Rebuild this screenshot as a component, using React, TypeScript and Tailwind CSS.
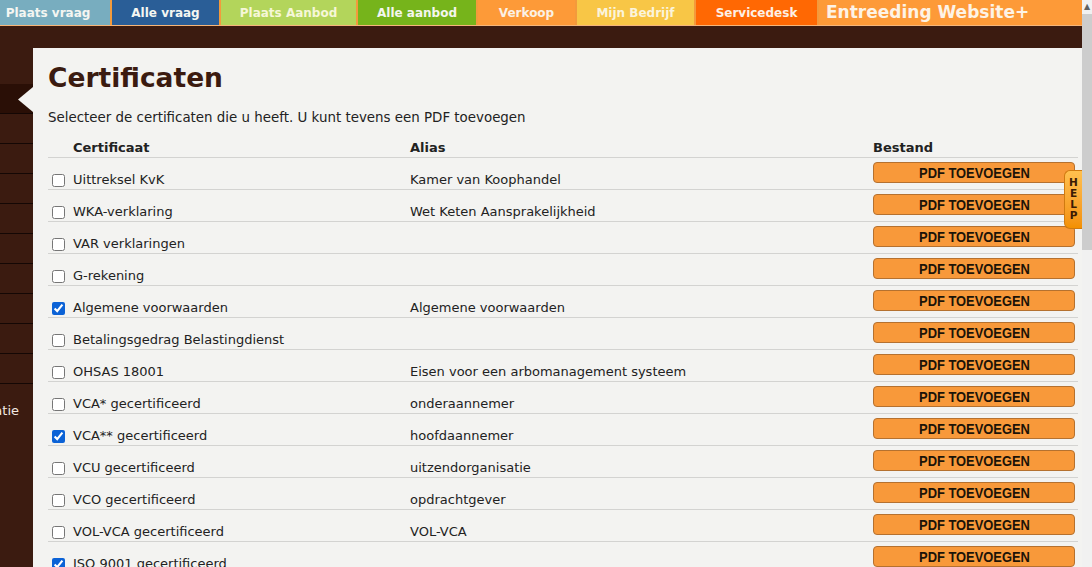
const tabs = [
  { label: "Plaats vraag", w: "w-[110px] pr-[14px]", bg: "bg-[#78adbf]", fg: "text-[#f4f6f2]" },
  { label: "Alle vraag", w: "w-[107px]", bg: "bg-[#2a5e97]", fg: "text-[#f4f6f2]" },
  { label: "Plaats Aanbod", w: "w-[135px]", bg: "bg-[#b3d55b]", fg: "text-[#f6f7d8]" },
  { label: "Alle aanbod", w: "w-[118px]", bg: "bg-[#76b41b]", fg: "text-[#f4f6ee]" },
  { label: "Verkoop", w: "w-[97px]", bg: "bg-[#fd9a38]", fg: "text-[#fbf1e4]" },
  { label: "Mijn Bedrijf", w: "w-[117px]", bg: "bg-[#f8c646]", fg: "text-[#fbf4dc]" },
  { label: "Servicedesk", w: "w-[121px]", bg: "bg-[#ff6803]", fg: "text-[#fdf0e6]" },
];

const rows: { name: string; alias: string; checked?: boolean }[] = [
  { name: "Uittreksel KvK", alias: "Kamer van Koophandel" },
  { name: "WKA-verklaring", alias: "Wet Keten Aansprakelijkheid" },
  { name: "VAR verklaringen", alias: "" },
  { name: "G-rekening", alias: "" },
  { name: "Algemene voorwaarden", alias: "Algemene voorwaarden", checked: true },
  { name: "Betalingsgedrag Belastingdienst", alias: "" },
  { name: "OHSAS 18001", alias: "Eisen voor een arbomanagement systeem" },
  { name: "VCA* gecertificeerd", alias: "onderaannemer" },
  { name: "VCA** gecertificeerd", alias: "hoofdaannemer", checked: true },
  { name: "VCU gecertificeerd", alias: "uitzendorganisatie" },
  { name: "VCO gecertificeerd", alias: "opdrachtgever" },
  { name: "VOL-VCA gecertificeerd", alias: "VOL-VCA" },
  { name: "ISO 9001 gecertificeerd", alias: "", checked: true },
];

function Sidebar() {
  return (
    <div className="flex w-[33px] shrink-0 flex-col pt-[58px]">
      <div className="relative h-[30px] border-b border-[#140704] bg-[#2a0f06]">
        <svg className="absolute right-0 top-[3px]" width="15" height="25" viewBox="0 0 15 25">
          <polygon points="15,0 0,12.5 15,25" fill="#f3f3f1" />
        </svg>
      </div>
      {Array.from({ length: 9 }).map((_, i) => (
        <div key={i} className="h-[30px] border-b border-[#140704]" />
      ))}
      <div className="flex justify-end overflow-hidden whitespace-nowrap pr-[14px] pt-[19px] text-[13px] leading-[16px] text-[#f2e9e2]">
        Informatie
      </div>
    </div>
  );
}

function Row({ name, alias, checked }: { name: string; alias: string; checked?: boolean }) {
  return (
    <div className="grid h-[32px] grid-cols-[25px_337px_463px_202px] border-b border-[#d3d3d1] text-[13px] leading-[16px] text-[#222]">
      <div className="pt-[16px]">
        <input
          type="checkbox"
          defaultChecked={checked}
          className="m-0 ml-[4px] block h-[13px] w-[13px] accent-[#0b62d6]"
        />
      </div>
      <div className="pt-[14px]">{name}</div>
      <div className="pt-[14px]">{alias}</div>
      <div className="pt-[4px]">
        <button className="flex h-[21px] w-[202px] items-center justify-center rounded-[4px] border border-[#b5712f] bg-[#f8993a] font-['Liberation_Sans',Arial,sans-serif] text-[15px] font-bold text-[#1c1408]">
          <span className="inline-block scale-x-[0.86] whitespace-nowrap">PDF TOEVOEGEN</span>
        </button>
      </div>
    </div>
  );
}

export default function App() {
  return (
    <div className="flex h-[567px] w-[1092px] overflow-hidden bg-[#3b1b10] font-['DejaVu_Sans',Verdana,sans-serif]">
      <div className="relative flex min-w-0 flex-1 flex-col">
        <nav className="flex h-[26px] shrink-0 gap-[2px] border-b border-[#f5b57a] bg-[#f39a3c]">
          {tabs.map((t) => (
            <div
              key={t.label}
              className={`${t.w} ${t.bg} ${t.fg} flex shrink-0 items-center justify-center text-[12px] font-bold`}
            >
              {t.label}
            </div>
          ))}
          <div className="flex flex-1 items-center bg-[#fd9a38] pl-[7px] text-[17px] font-bold text-[#fdf3e6]">
            Entreeding Website+
          </div>
        </nav>

        <div className="flex min-h-0 flex-1">
          <Sidebar />
          <main className="mt-[22px] min-w-0 flex-1 bg-[#f3f3f1] pl-[15px] pr-[4px] pt-[14px]">
            <h1 className="text-[26.5px] font-bold leading-[32px] text-[#3b1b10]">Certificaten</h1>
            <p className="mt-[16px] text-[13.4px] leading-[16px] text-[#222]">
              Selecteer de certificaten die u heeft. U kunt tevens een PDF toevoegen
            </p>
            <div className="mt-[14px] grid grid-cols-[25px_337px_463px_202px] border-b border-[#d3d3d1] pb-[1px] text-[13px] font-bold leading-[16px] text-[#222]">
              <div />
              <div>Certificaat</div>
              <div>Alias</div>
              <div>Bestand</div>
            </div>
            {rows.map((r) => (
              <Row key={r.name} {...r} />
            ))}
          </main>
        </div>

        <div className="absolute right-0 top-[170px] flex h-[59px] w-[18px] flex-col items-center rounded-l-[6px] border border-r-0 border-[#d07a10] bg-gradient-to-b from-[#ffc04e] to-[#f39000] pt-[6px] text-[10.5px] font-bold leading-[11px] text-[#3a1a05]">
          <span>H</span>
          <span>E</span>
          <span>L</span>
          <span>P</span>
        </div>
      </div>

      <div className="flex w-[10px] shrink-0 flex-col bg-[#f1f1f1]">
        <div className="flex h-[14px] items-center justify-center text-[8px] leading-none text-[#606060]">▲</div>
        <div className="h-[236px] bg-[#cdcdcd]" />
      </div>
    </div>
  );
}
